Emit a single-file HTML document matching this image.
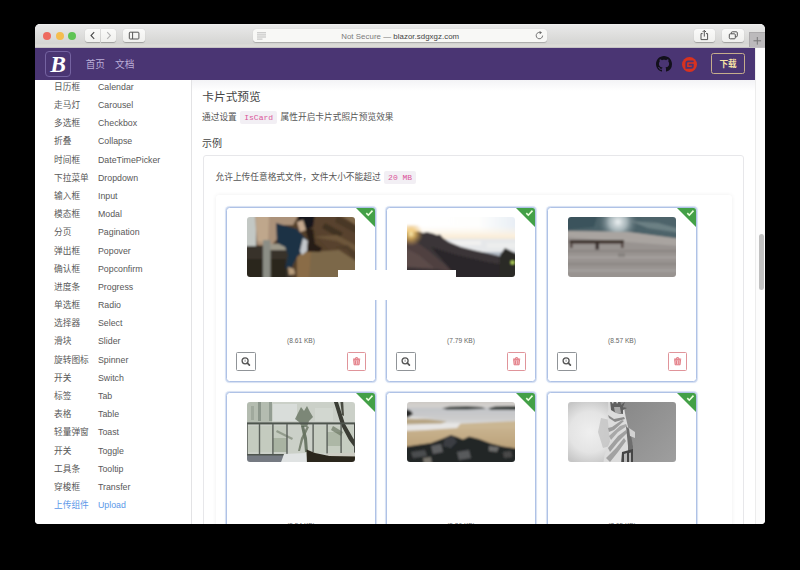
<!DOCTYPE html>
<html lang="zh-CN">
<head>
<meta charset="utf-8">
<title>Not Secure — blazor.sdgxgz.com</title>
<style>
*{box-sizing:border-box;margin:0;padding:0}
html,body{width:800px;height:570px;overflow:hidden;background:#000}
body{font-family:"Liberation Sans","Noto Sans CJK SC",sans-serif;position:relative;color:#333}
.win{position:absolute;left:35px;top:23.5px;width:730px;height:500px;background:#fff;border-radius:5px 5px 4px 4px;overflow:hidden}
.tb{position:absolute;left:0;top:0;width:730px;height:24px;background:linear-gradient(#f2f2f2 0,#e8e8e8 1.500px,#d5d5d3 19.500px,#dcdbd7 21px,#dcdbd7 100%);border-bottom:.500px solid #c4c2c4}
.dot{position:absolute;top:8.300px;width:8px;height:8px;border-radius:50%}
.tbtn svg,.plus svg{display:block}
.tbtn{position:absolute;top:5.500px;height:13px;background:linear-gradient(#fafaf9,#f0f0ee);border-radius:3px;box-shadow:0 .5px .8px rgba(0,0,0,.25)}
.url{position:absolute;left:218.200px;top:5.300px;width:294px;height:13px;background:#f8f8f6;border-radius:3px;box-shadow:0 .5px .8px rgba(0,0,0,.2);font-size:7.850px;line-height:15.300px;text-align:center;color:#444;letter-spacing:.05px}
.ns{color:#7a7a7a}
.plus{position:absolute;left:714px;top:8.300px;width:16px;height:15.700px;background:#bcbabc;border-left:1px solid #acaaac;border-top:1px solid #acaaac}
.nav{position:absolute;left:0;top:24px;width:720px;height:32.5px;background:#4a3573}
.logo{position:absolute;left:10.200px;top:3.500px;width:25.800px;height:25.500px;border:1px solid #7563a1;border-radius:4px;background:#4a3573;color:#fff;font-family:"Liberation Serif",serif;font-style:italic;font-weight:bold;font-size:23.500px;line-height:24.500px;text-align:center}
.nl{position:absolute;top:11.300px;font-size:9.700px;line-height:12px;color:#bbaed8}
.dl{position:absolute;left:676px;top:5.300px;width:34.200px;height:21.500px;border:1px solid #c5ad8c;border-radius:2.5px;color:#f7e3a5;font-size:8.600px;font-weight:bold;line-height:20px;text-align:center}
.side{position:absolute;left:0;top:56.5px;width:156px;height:443.5px;background:#fff}
.div{position:absolute;left:155.800px;top:56.500px;width:1px;height:443.500px;background:#e3e3e5;z-index:3}
.si{position:absolute;left:19px;font-size:8.7px;line-height:12px;color:#585858;white-space:nowrap}
.si b{font-weight:normal;position:absolute;left:44px;top:0;font-size:8.8px}
.si.act,.si.act b{color:#5b97e8}
.main{position:absolute;left:156px;top:56.5px;width:564px;height:443.5px;background:linear-gradient(#f3f3f6,#fff 11px);overflow:hidden}
.sb{position:absolute;left:720px;top:24px;width:10px;height:476px;background:#fcfcfc;border-left:1px solid #ececec}
.thumb{position:absolute;left:2.800px;top:186.500px;width:4.800px;height:56px;border-radius:3px;background:#c1c1c1}
h2{position:absolute;left:11.300px;top:9.300px;font-size:11.700px;font-weight:normal;color:#454545;line-height:16px}
.p1{position:absolute;left:11px;top:29.7px;font-size:8.7px;line-height:14px;color:#555;white-space:nowrap}
code{font-family:"Liberation Mono",monospace;color:#db559a;background:#f2eff4;border-radius:2px;padding:2px 4px;margin:0 1.100px;font-size:8px}
h3{position:absolute;left:11px;top:56.5px;font-size:10px;font-weight:normal;color:#454545;line-height:14px}
.card{position:absolute;left:11.5px;top:75px;width:541.700px;height:400px;border:1px solid #e7e7ea;border-radius:3px;background:#fff}
.p2{position:absolute;left:12px;top:14px;font-size:8.7px;line-height:14px;color:#555;white-space:nowrap}
.inner{position:absolute;left:12px;top:39px;width:516.500px;height:380px;border-radius:3px;box-shadow:0 0 4px rgba(0,0,0,.07);background:#fff}
.uc{position:absolute;width:150px;height:175px;border:1px solid #afc2e6;border-radius:3.500px;background:#fff;overflow:hidden;box-shadow:0 0 0 1px rgba(175,194,230,.4),0 0 2.500px rgba(150,175,225,.3)}
.uc .img{position:absolute;left:19.800px;top:9px;width:108.600px;height:60px;border-radius:3px;overflow:hidden}
.uc .tri{position:absolute;right:0;top:0;width:0;height:0;border-top:19px solid #43a047;border-left:19px solid transparent}
.uc .ck{position:absolute;right:.800px;top:.600px}
.uc .sz{position:absolute;left:0;width:100%;top:127.800px;text-align:center;font-size:6.6px;color:#666;line-height:9px}
.uc .zb,.uc .db{position:absolute;top:144px;width:19.500px;height:19px;border:1px solid #909498;border-radius:1.5px}
.uc .zb{left:9px}
.uc .db{left:120px;width:19px;border-color:#e0949a}
.cover{position:absolute;background:#fff}
</style>
</head>
<body>
<div class="win">
  <div class="tb">
    <div class="dot" style="left:8px;background:#ee6a5f"></div>
    <div class="dot" style="left:20.7px;background:#f5bd4f"></div>
    <div class="dot" style="left:32.8px;background:#5fc454"></div>
    <div class="tbtn" style="left:49.5px;width:15.2px;border-radius:3px 0 0 3px"><svg width="15" height="13" viewBox="0 0 15 13"><path d="M9.2 3.2L6 6.5l3.2 3.3" fill="none" stroke="#4a4a4a" stroke-width="1.1"/></svg></div>
    <div class="tbtn" style="left:65.5px;width:15.5px;border-radius:0 3px 3px 0"><svg width="15" height="13" viewBox="0 0 15 13"><path d="M6.2 3.2l3.2 3.3-3.2 3.3" fill="none" stroke="#b4b4b4" stroke-width="1.1"/></svg></div>
    <div class="tbtn" style="left:87.7px;width:22.5px"><svg width="22" height="13" viewBox="0 0 22 13"><rect x="6.3" y="3.2" width="9.6" height="6.8" rx=".8" fill="none" stroke="#555" stroke-width="1"/><path d="M9.6 3.2v6.8" stroke="#555" stroke-width="1"/></svg></div>
    <div class="url"><svg style="position:absolute;left:4px;top:3px" width="10" height="8" viewBox="0 0 10 8"><path d="M0 .8h9M0 2.900h9M0 5h9M0 7.100h5.500" stroke="#a4a4a4" stroke-width=".700"/></svg><span class="ns">Not Secure — </span>blazor.sdgxgz.com<svg style="position:absolute;left:282px;top:2.5px" width="9" height="9" viewBox="0 0 9 9"><path d="M7.6 4.6a3.2 3.2 0 1 1-1.6-2.8" fill="none" stroke="#666" stroke-width=".9"/><path d="M4.6 0l2.4 1.6-2.2 1.6z" fill="#666"/></svg></div>
    <div class="tbtn" style="left:659px;width:21px"><svg width="21" height="13" viewBox="0 0 21 13"><path d="M8.6 4.6h-1.6v6h6.600v-6h-1.600" fill="none" stroke="#555" stroke-width="1"/><path d="M10.3 7.6v-6M8.500 3.100l1.800-1.800 1.800 1.800" fill="none" stroke="#555" stroke-width="1"/></svg></div>
    <div class="tbtn" style="left:686.6px;width:22.5px"><svg width="22" height="13" viewBox="0 0 22 13"><rect x="7.300" y="4.800" width="6" height="5" rx="1" fill="none" stroke="#555" stroke-width="1"/><path d="M9.300 4.800v-1a1 1 0 0 1 1-1h4a1 1 0 0 1 1 1v3a1 1 0 0 1-1 1h-1" fill="none" stroke="#555" stroke-width="1"/></svg></div>
    <div class="plus"><svg width="15" height="15" viewBox="0 0 15 15"><path d="M3.500 7.800h7.600M7.300 4v7.600" stroke="#777" stroke-width="1"/></svg></div>
  </div>
  <div class="nav">
    <div class="logo">B</div>
    <div class="nl" style="left:50.7px">首页</div>
    <div class="nl" style="left:80px">文档</div>
    <svg style="position:absolute;left:620.800px;top:8.500px" width="16" height="16" viewBox="0 0 16 16"><path fill="#12101a" d="M8 0C3.580 0 0 3.580 0 8c0 3.540 2.290 6.530 5.470 7.590.4.070.55-.17.550-.38 0-.19-.01-.82-.01-1.490-2.010.37-2.530-.49-2.690-.94-.09-.23-.48-.94-.82-1.130-.28-.15-.68-.52-.01-.53.630-.01 1.080.58 1.230.82.720 1.210 1.870.87 2.330.66.070-.52.280-.87.510-1.070-1.780-.2-3.640-.89-3.640-3.950 0-.87.310-1.590.82-2.150-.08-.2-.36-1.020.08-2.120 0 0 .67-.21 2.200.82.640-.18 1.320-.27 2-.27s1.360.09 2 .27c1.530-1.040 2.200-.82 2.200-.82.440 1.100.16 1.920.08 2.120.51.560.82 1.270.82 2.150 0 3.070-1.870 3.750-3.650 3.950.29.250.54.730.54 1.480 0 1.070-.01 1.930-.01 2.200 0 .21.150.46.550.38A8.013 8.013 0 0 0 16 8c0-4.420-3.580-8-8-8z"/></svg>
    <svg style="position:absolute;left:646.700px;top:9px" width="15" height="15" viewBox="0 0 15 15"><circle cx="7.500" cy="7.500" r="7.500" fill="#d8321f"/><path d="M11.300 6.700H7.100a.4.400 0 0 0-.4.400v.9c0 .2.200.4.400.4h2.500c.2 0 .4.200.4.400v.2c0 .6-.5 1.100-1.100 1.100H5.500a.4.400 0 0 1-.4-.4V6.300c0-.6.500-1.100 1.100-1.100h5.100c.2 0 .4-.2.400-.4v-.9a.4.400 0 0 0-.4-.4H6.200A2.800 2.800 0 0 0 3.400 6.300v5.100c0 .2.200.4.400.4h5.400a2.500 2.500 0 0 0 2.500-2.500V7.100a.4.400 0 0 0-.4-.4z" fill="#4a3573"/></svg>
    <div class="dl">下载</div>
  </div>
  <div class="side">
    <div class="si" style="top:0.90px">日历框<b>Calendar</b></div>
    <div class="si" style="top:19.08px">走马灯<b>Carousel</b></div>
    <div class="si" style="top:37.26px">多选框<b>Checkbox</b></div>
    <div class="si" style="top:55.44px">折叠<b>Collapse</b></div>
    <div class="si" style="top:73.62px">时间框<b>DateTimePicker</b></div>
    <div class="si" style="top:91.80px">下拉菜单<b>Dropdown</b></div>
    <div class="si" style="top:109.98px">输入框<b>Input</b></div>
    <div class="si" style="top:128.16px">模态框<b>Modal</b></div>
    <div class="si" style="top:146.34px">分页<b>Pagination</b></div>
    <div class="si" style="top:164.52px">弹出框<b>Popover</b></div>
    <div class="si" style="top:182.70px">确认框<b>Popconfirm</b></div>
    <div class="si" style="top:200.88px">进度条<b>Progress</b></div>
    <div class="si" style="top:219.06px">单选框<b>Radio</b></div>
    <div class="si" style="top:237.24px">选择器<b>Select</b></div>
    <div class="si" style="top:255.42px">滑块<b>Slider</b></div>
    <div class="si" style="top:273.60px">旋转图标<b>Spinner</b></div>
    <div class="si" style="top:291.78px">开关<b>Switch</b></div>
    <div class="si" style="top:309.96px">标签<b>Tab</b></div>
    <div class="si" style="top:328.14px">表格<b>Table</b></div>
    <div class="si" style="top:346.32px">轻量弹窗<b>Toast</b></div>
    <div class="si" style="top:364.50px">开关<b>Toggle</b></div>
    <div class="si" style="top:382.68px">工具条<b>Tooltip</b></div>
    <div class="si" style="top:400.86px">穿梭框<b>Transfer</b></div>
    <div class="si act" style="top:419.04px">上传组件<b>Upload</b></div>
  </div>
  <div class="div"></div>
  <div class="main">
    <h2>卡片式预览</h2>
    <div class="p1">通过设置 <code>IsCard</code> 属性开启卡片式照片预览效果</div>
    <h3>示例</h3>
    <div class="card">
      <div class="p2">允许上传任意格式文件，文件大小不能超过 <code>20 MB</code></div>
      <div class="inner">
      <div class="uc" style="left:10.5px;top:12px">
        <div class="img"><svg width="109" height="60" viewBox="0 0 109 60"><defs><filter id="b1" x="-5%" y="-5%" width="110%" height="110%"><feGaussianBlur stdDeviation="0.8"/></filter></defs><g filter="url(#b1)">
<rect x="-3" y="-3" width="115" height="66" fill="#54402c"/>
<polygon points="62,-3 112,-3 112,40 84,34 70,20" fill="#58432e"/>
<polygon points="92,-3 112,-3 112,10" fill="#80694b"/>
<polygon points="78,6 96,16 92,21 75,11" fill="#3f3120"/>
<polygon points="90,-1 112,10 112,18 88,5" fill="#4a3926"/>
<polygon points="66,20 90,24 112,36 112,30 90,18" fill="#6d573b"/>
<polygon points="50,36 92,33 112,46 112,63 50,63" fill="#7c6848"/>
<polygon points="50,36 64,35 62,63 50,63" fill="#8a6c46"/>
<polygon points="88,30 100,33 112,48 112,38 100,28" fill="#4f3e2a"/>
<rect x="-3" y="-3" width="12" height="34" fill="#c3c8c4"/>
<rect x="-3" y="29" width="48" height="34" fill="#38322a"/>
<rect x="-3" y="42" width="42" height="21" fill="#2a251d"/>
<polygon points="8,-3 52,-3 46,8 34,8 30,22 24,29 10,28" fill="#ab927a"/>
<polygon points="9,-3 22,-3 21,26 10,24" fill="#bfa78c"/>
<rect x="20" y="27" width="24" height="6" fill="#9d998a"/>
<rect x="16" y="23" width="7.500" height="40" fill="#8c8e86"/>
<polygon points="29,6 50,12 60,23 59,32 50,40 44,52 38,51 41,38 38,30 30,26" fill="#1f3144"/>
<polygon points="51,-3 68,-3 66,10 58,13 51,9" fill="#17161d"/>
<polygon points="56,21 61,24 60,34 55,38 53,34" fill="#c2c6ca"/>
<polygon points="58,11 66,12 68,27 75,31 73,35 60,34 61,22" fill="#261a14"/>
<polygon points="41,50 47,52 48,57 42,58" fill="#b89c7a"/>
<polygon points="50,5 56,3 59,13 53,15" fill="#c4a88e"/>
</g></svg></div>
        <div class="tri"></div><svg class="ck" width="9" height="8" viewBox="0 0 9 8"><path d="M1.300 4.100l2 2.100 4.200-4.600" fill="none" stroke="#eaffdc" stroke-width="1.600"/></svg>
        <div class="sz">(8.61 KB)</div>
        <div class="zb"><svg width="17" height="17" viewBox="0 0 17 17"><circle cx="8.1" cy="7.8" r="3" fill="none" stroke="#555" stroke-width="1.3"/><path d="M10.4 10.1l2 2" stroke="#555" stroke-width="1.7" stroke-linecap="round"/><path d="M8.1 6.6v2.2" stroke="#666" stroke-width=".7"/></svg></div>
        <div class="db"><svg width="17" height="17" viewBox="0 0 17 17"><path d="M5 6.1h7.2M7.2 5.9l.5-1.2h1.8l.5 1.2" fill="none" stroke="#e0707a" stroke-width="1"/><path d="M5.7 6.8h5.8l-.4 5h-5z" fill="#f3c3c8" stroke="#e0707a" stroke-width=".9"/><path d="M7.5 7.6v3.6M9.7 7.6v3.6" stroke="#e0707a" stroke-width=".8"/></svg></div>
      </div>
      <div class="uc" style="left:170.5px;top:12px">
        <div class="img"><svg width="109" height="60" viewBox="0 0 109 60"><defs><filter id="b2" x="-5%" y="-5%" width="110%" height="110%"><feGaussianBlur stdDeviation="0.8"/></filter><linearGradient id="s2" x1="0" y1="0" x2="1" y2="0"><stop offset="0" stop-color="#ffffff"/><stop offset=".65" stop-color="#fefefd"/><stop offset="1" stop-color="#e6edf4"/></linearGradient><linearGradient id="h2" x1="0" y1="0" x2="0" y2="1"><stop offset="0" stop-color="#fdf6ea" stop-opacity="0"/><stop offset=".7" stop-color="#fbefdc"/><stop offset="1" stop-color="#f3e8d8"/></linearGradient><radialGradient id="g2" cx="4" cy="17" r="12" gradientUnits="userSpaceOnUse"><stop offset="0" stop-color="#fff2b8"/><stop offset=".35" stop-color="#eebf62" stop-opacity=".8"/><stop offset="1" stop-color="#e0a850" stop-opacity="0"/></radialGradient></defs><g filter="url(#b2)">
<rect x="-3" y="-3" width="115" height="66" fill="url(#s2)"/>
<rect x="-3" y="9" width="115" height="14" fill="url(#h2)"/>
<rect x="36" y="22" width="76" height="15" fill="#e6e8ea"/>
<rect x="44" y="24" width="30" height="4" fill="#f1f1f0"/>
<rect x="80" y="26" width="32" height="5" fill="#eceded"/>
<rect x="60" y="35" width="52" height="7" fill="#b2bac4"/>
<polygon points="-3,15.500 5,15 12,14.500 16,16 20,15 26,16.500 30,18 33,17.500 36,21 42,25 54,30 68,33.500 84,37 96,40 112,44 112,63 -3,63" fill="#3b3537"/>
<polygon points="-3,20 8,24 22,34 36,46 46,56 50,63 -3,63" fill="#4f4141"/>
<polygon points="-3,30 12,38 26,50 34,63 -3,63" fill="#5b4b49"/>
<polygon points="-3,50 30,52 50,56 50,63 -3,63" fill="#3a3234"/>
<polygon points="24,30 50,38 80,45 112,50 112,63 52,63 40,48" fill="#2b2729"/>
<polygon points="93,38 98,31 112,38 112,63 92,63" fill="#2a2a27"/>
<rect x="-3" y="8" width="26" height="22" fill="url(#g2)"/>
<circle cx="105.500" cy="45.500" r="2" fill="#b4d45a"/>
</g></svg></div>
        <div class="tri"></div><svg class="ck" width="9" height="8" viewBox="0 0 9 8"><path d="M1.300 4.100l2 2.100 4.200-4.600" fill="none" stroke="#eaffdc" stroke-width="1.600"/></svg>
        <div class="sz">(7.79 KB)</div>
        <div class="zb"><svg width="17" height="17" viewBox="0 0 17 17"><circle cx="8.1" cy="7.8" r="3" fill="none" stroke="#555" stroke-width="1.3"/><path d="M10.4 10.1l2 2" stroke="#555" stroke-width="1.7" stroke-linecap="round"/><path d="M8.1 6.6v2.2" stroke="#666" stroke-width=".7"/></svg></div>
        <div class="db"><svg width="17" height="17" viewBox="0 0 17 17"><path d="M5 6.1h7.2M7.2 5.9l.5-1.2h1.8l.5 1.2" fill="none" stroke="#e0707a" stroke-width="1"/><path d="M5.7 6.8h5.8l-.4 5h-5z" fill="#f3c3c8" stroke="#e0707a" stroke-width=".9"/><path d="M7.5 7.6v3.6M9.7 7.6v3.6" stroke="#e0707a" stroke-width=".8"/></svg></div>
      </div>
      <div class="uc" style="left:331.5px;top:12px">
        <div class="img"><svg width="109" height="60" viewBox="0 0 109 60"><defs><filter id="b3" x="-5%" y="-5%" width="110%" height="110%"><feGaussianBlur stdDeviation="0.8"/></filter><radialGradient id="g3" cx="50" cy="5" r="20" gradientUnits="userSpaceOnUse"><stop offset="0" stop-color="#eef2f3"/><stop offset=".45" stop-color="#b4c1c5" stop-opacity=".85"/><stop offset="1" stop-color="#5a6e74" stop-opacity="0"/></radialGradient></defs><g filter="url(#b3)">
<rect x="-3" y="-3" width="115" height="66" fill="#989390"/>
<polygon points="-3,-3 112,-3 112,22 60,15 -3,14" fill="#4c6269"/>
<polygon points="-3,-3 30,-3 26,10 -3,13" fill="#3b535b"/>
<polygon points="72,-3 112,-3 112,20 78,14" fill="#4e646a"/>
<polygon points="62,4 90,6 112,12 112,16 80,11" fill="#6c8084"/>
<rect x="26" y="-3" width="48" height="20" fill="url(#g3)"/>
<polygon points="-3,14 60,15 112,22 112,29 -3,20" fill="#a9a4a0"/>
<rect x="-3" y="33" width="115" height="2" fill="#8a8582"/>
<rect x="-3" y="39" width="115" height="2.500" fill="#a5a09d"/>
<rect x="-3" y="46" width="115" height="2" fill="#8b8784"/>
<rect x="-3" y="52" width="115" height="3" fill="#a29e9b"/>
<rect x="1.500" y="23" width="54.500" height="3.600" fill="#3c302c"/>
<rect x="2" y="26" width="2.500" height="5" fill="#51443f"/>
<rect x="27.500" y="26" width="3.500" height="6.500" fill="#392e2c"/>
<rect x="53" y="26" width="2.500" height="5" fill="#51443f"/>
<rect x="50" y="36" width="7" height="4" fill="#878380"/>
</g></svg></div>
        <div class="tri"></div><svg class="ck" width="9" height="8" viewBox="0 0 9 8"><path d="M1.300 4.100l2 2.100 4.200-4.600" fill="none" stroke="#eaffdc" stroke-width="1.600"/></svg>
        <div class="sz">(8.57 KB)</div>
        <div class="zb"><svg width="17" height="17" viewBox="0 0 17 17"><circle cx="8.1" cy="7.8" r="3" fill="none" stroke="#555" stroke-width="1.3"/><path d="M10.4 10.1l2 2" stroke="#555" stroke-width="1.7" stroke-linecap="round"/><path d="M8.1 6.6v2.2" stroke="#666" stroke-width=".7"/></svg></div>
        <div class="db"><svg width="17" height="17" viewBox="0 0 17 17"><path d="M5 6.1h7.2M7.2 5.9l.5-1.2h1.8l.5 1.2" fill="none" stroke="#e0707a" stroke-width="1"/><path d="M5.7 6.8h5.8l-.4 5h-5z" fill="#f3c3c8" stroke="#e0707a" stroke-width=".9"/><path d="M7.5 7.6v3.6M9.7 7.6v3.6" stroke="#e0707a" stroke-width=".8"/></svg></div>
      </div>
      <div class="uc" style="left:10.5px;top:197px">
        <div class="img"><svg width="109" height="60" viewBox="0 0 109 60"><defs><filter id="b4" x="-5%" y="-5%" width="110%" height="110%"><feGaussianBlur stdDeviation="0.7"/></filter></defs><g filter="url(#b4)">
<rect x="-3" y="-3" width="115" height="66" fill="#cbd0c8"/>
<rect x="-3" y="-3" width="28" height="24" fill="#b4bcb0"/>
<rect x="26" y="2" width="24" height="17" fill="#d9ddda"/>
<rect x="68" y="6" width="18" height="13" fill="#d2d7d0"/>
<rect x="11" y="0" width="3" height="19" fill="#8c968b"/>
<rect x="22" y="-3" width="3" height="22" fill="#939d92"/>
<rect x="4" y="4" width="3" height="14" fill="#a0a99d"/>
<rect x="0" y="24" width="40" height="26" fill="#c4cbbf"/>
<rect x="26" y="36" width="14" height="14" fill="#a9b3a2"/>
<rect x="66" y="24" width="40" height="27" fill="#c6cdc1"/>
<rect x="80" y="30" width="14" height="14" fill="#adb7a6"/>
<polygon points="86,-3 90,-3 98,22 106,36 110,42 108,46 102,38 94,23" fill="#3a3c34"/>
<polygon points="93,-3 96,-3 97,14 95,13" fill="#4a4c42"/>
<polygon points="86,24 96,30 94,34 84,28" fill="#6c7764" opacity=".7"/>
<polygon points="51,11 54,5 57,9 60,4 63,10 66,15 62,19 60,25 55,25 52,20 48,17" fill="#5a6854" opacity=".7"/>
<polygon points="54,24 57,24 60,36 61,50 58,50 57,38" fill="#5c6956" opacity=".85"/>
<polygon points="60,24 62,25 56,38 53,49 51,49 54,36" fill="#66725f" opacity=".8"/>
<polygon points="30,28 46,36 45,38 29,30" fill="#7d8876" opacity=".7"/>
<rect x="-3" y="20.400" width="115" height="2" fill="#4e544e"/>
<rect x="-1" y="22" width="1.800" height="31" fill="#5a605a"/>
<rect x="11.800" y="22" width="1.400" height="31" fill="#5a605a"/>
<rect x="25.200" y="22" width="1.400" height="31" fill="#5a605a"/>
<rect x="39.300" y="22" width="1.400" height="31" fill="#5a605a"/>
<rect x="65.400" y="22" width="1.400" height="28" fill="#5a605a"/>
<rect x="79.400" y="22" width="1.400" height="30" fill="#5a605a"/>
<rect x="93.400" y="22" width="1.400" height="30" fill="#5a605a"/>
<rect x="107" y="22" width="1.800" height="30" fill="#484d47"/>
<rect x="-3" y="53" width="40" height="10" fill="#747a82"/>
<rect x="-3" y="52" width="40" height="1.500" fill="#50544f"/>
<polygon points="37,52 59,51 62,63 33,63" fill="#e0e3e3"/>
<polygon points="59.500,47.500 68,51 80,53.500 112,54 112,63 60,63" fill="#2b261a"/>
<polygon points="78,51.500 112,50.500 112,54.500 82,54" fill="#cbcbc2"/>
</g></svg></div>
        <div class="tri"></div><svg class="ck" width="9" height="8" viewBox="0 0 9 8"><path d="M1.300 4.100l2 2.100 4.200-4.600" fill="none" stroke="#eaffdc" stroke-width="1.600"/></svg>
        <div class="sz">(9.54 KB)</div>
        <div class="zb"><svg width="17" height="17" viewBox="0 0 17 17"><circle cx="8.1" cy="7.8" r="3" fill="none" stroke="#555" stroke-width="1.3"/><path d="M10.4 10.1l2 2" stroke="#555" stroke-width="1.7" stroke-linecap="round"/><path d="M8.1 6.6v2.2" stroke="#666" stroke-width=".7"/></svg></div>
        <div class="db"><svg width="17" height="17" viewBox="0 0 17 17"><path d="M5 6.1h7.2M7.2 5.9l.5-1.2h1.8l.5 1.2" fill="none" stroke="#e0707a" stroke-width="1"/><path d="M5.7 6.8h5.8l-.4 5h-5z" fill="#f3c3c8" stroke="#e0707a" stroke-width=".9"/><path d="M7.5 7.6v3.6M9.7 7.6v3.6" stroke="#e0707a" stroke-width=".8"/></svg></div>
      </div>
      <div class="uc" style="left:170.5px;top:197px">
        <div class="img"><svg width="109" height="60" viewBox="0 0 109 60"><defs><filter id="b5" x="-5%" y="-5%" width="110%" height="110%"><feGaussianBlur stdDeviation="0.8"/></filter><linearGradient id="s5" x1="0" y1="0" x2="0" y2="1"><stop offset="0" stop-color="#c6c1bd"/><stop offset=".1" stop-color="#d4d1ce"/><stop offset=".16" stop-color="#c3c5c8"/><stop offset=".3" stop-color="#cccccc"/><stop offset=".4" stop-color="#dedede"/><stop offset=".45" stop-color="#c8b28e"/><stop offset=".75" stop-color="#bba27a"/><stop offset="1" stop-color="#a88c62"/></linearGradient></defs><g filter="url(#b5)">
<rect x="-3" y="-3" width="115" height="66" fill="url(#s5)"/>
<polygon points="48,22 112,19 112,27 48,27" fill="#cab692"/>
<polygon points="-3,21 54,21 50,26 20,28 -3,29" fill="#e6e5e4"/>
<polygon points="-3,15.700 16,16.500 40,19.500 34,21.500 -3,22.500" fill="#b7a685"/>
<polygon points="-3,13 8,15 30,16.500 8,17 -3,16.500" fill="#dfdedd"/>
<polygon points="35,6.600 42,4.800 60,4.300 74,4.900 79,6.800 60,7.600 40,7.600" fill="#2e3432"/>
<polygon points="81,6.400 88,4.400 112,4 112,7.900 84,7.700" fill="#2a302e"/>
<polygon points="-3,6 4,9 6,12 2,15 -3,16" fill="#2a2c2a"/>
<polygon points="-3,45 10,43 24,41 36,36.500 44,33 50,35 56,37.500 62,34.500 72,37 84,41.500 96,44.500 112,47 112,63 -3,63" fill="#242527"/>
<polygon points="38,36 46,34 50,40 44,46 36,44" fill="#3b3e43"/>
<polygon points="24,44 34,42 36,50 26,52" fill="#5e6062"/>
<polygon points="50,50 62,48 64,56 52,58" fill="#585a5c"/>
<polygon points="4,50 18,48 20,54 6,56" fill="#4c4e50"/>
<polygon points="82,44 92,45 90,50 82,49" fill="#6c6c6a"/>
<polygon points="16,56 24,55 25,62 17,62" fill="#77736c"/>
<polygon points="96,50 104,49 105,55 97,56" fill="#4a4a4a"/>
</g></svg></div>
        <div class="tri"></div><svg class="ck" width="9" height="8" viewBox="0 0 9 8"><path d="M1.300 4.100l2 2.100 4.200-4.600" fill="none" stroke="#eaffdc" stroke-width="1.600"/></svg>
        <div class="sz">(9.86 KB)</div>
        <div class="zb"><svg width="17" height="17" viewBox="0 0 17 17"><circle cx="8.1" cy="7.8" r="3" fill="none" stroke="#555" stroke-width="1.3"/><path d="M10.4 10.1l2 2" stroke="#555" stroke-width="1.7" stroke-linecap="round"/><path d="M8.1 6.6v2.2" stroke="#666" stroke-width=".7"/></svg></div>
        <div class="db"><svg width="17" height="17" viewBox="0 0 17 17"><path d="M5 6.1h7.2M7.2 5.9l.5-1.2h1.8l.5 1.2" fill="none" stroke="#e0707a" stroke-width="1"/><path d="M5.7 6.8h5.8l-.4 5h-5z" fill="#f3c3c8" stroke="#e0707a" stroke-width=".9"/><path d="M7.5 7.6v3.6M9.7 7.6v3.6" stroke="#e0707a" stroke-width=".8"/></svg></div>
      </div>
      <div class="uc" style="left:331.5px;top:197px">
        <div class="img"><svg width="109" height="60" viewBox="0 0 109 60"><defs><filter id="b6" x="-5%" y="-5%" width="110%" height="110%"><feGaussianBlur stdDeviation="0.7"/></filter><radialGradient id="s6" cx="22" cy="30" r="34" gradientUnits="userSpaceOnUse"><stop offset="0" stop-color="#efefef"/><stop offset=".6" stop-color="#e4e4e4"/><stop offset="1" stop-color="#c6c6c6"/></radialGradient><linearGradient id="r6" x1="0" y1="0" x2="1" y2="1"><stop offset="0" stop-color="#878787"/><stop offset="1" stop-color="#a0a0a0"/></linearGradient></defs><g filter="url(#b6)">
<rect x="-3" y="-3" width="115" height="66" fill="url(#s6)"/>
<rect x="52" y="-3" width="60" height="66" fill="url(#r6)"/>
<polygon points="33,16 42,18 42,44 35,46 30,30" fill="#b8b8b8" opacity=".6"/>
<polygon points="40,-3 52,-3 52,10 40,12" fill="#d8d8d8"/>
<polygon points="43,3 56,5 57.500,14 60,25 64.500,43 64.500,63 35,63 36.500,53 42,39.500 40.500,25 39,11.500" fill="#dcdcdc"/>
<polygon points="42,-2 45,2 47,-3 49,2 52,-3 53,3 57,0 55,5 59,6 55,8 55,12 48,11 43,8" fill="#5e5e5e"/>
<polygon points="46,5 52,5 53,11 47,11" fill="#a8a8a8"/>
<polygon points="40,13 46,17 56,15 57,17 47,20 41,16" fill="#8a8a8a"/>
<polygon points="40,26 44,25 54,18 56,19 46,28 41,30" fill="#9c9c9c"/>
<polygon points="41,34 52,24 58,22 59,24 50,30 43,38" fill="#a8a8a8"/>
<polygon points="40,46 50,34 58,28 59,31 50,40 42,50" fill="#a0a0a0"/>
<polygon points="38,56 48,46 56,36 58,39 50,50 42,60" fill="#a2a2a2"/>
<polygon points="58,24 62,28 65,44 65,63 60,63 60,44" fill="#6e6e6e"/>
<polygon points="61,26 67,30 67,36 62,34" fill="#d2d2d2"/>
<polygon points="54,50 65,47 65,63 53,63" fill="#444"/>
<polygon points="56,52 59,51 59,63 56,63" fill="#b8b8b8"/>
<polygon points="61,51 63,50.500 63,63 61,63" fill="#b0b0b0"/>
</g></svg></div>
        <div class="tri"></div><svg class="ck" width="9" height="8" viewBox="0 0 9 8"><path d="M1.300 4.100l2 2.100 4.200-4.600" fill="none" stroke="#eaffdc" stroke-width="1.600"/></svg>
        <div class="sz">(7.65 KB)</div>
        <div class="zb"><svg width="17" height="17" viewBox="0 0 17 17"><circle cx="8.1" cy="7.8" r="3" fill="none" stroke="#555" stroke-width="1.3"/><path d="M10.4 10.1l2 2" stroke="#555" stroke-width="1.7" stroke-linecap="round"/><path d="M8.1 6.6v2.2" stroke="#666" stroke-width=".7"/></svg></div>
        <div class="db"><svg width="17" height="17" viewBox="0 0 17 17"><path d="M5 6.1h7.2M7.2 5.9l.5-1.2h1.8l.5 1.2" fill="none" stroke="#e0707a" stroke-width="1"/><path d="M5.7 6.8h5.8l-.4 5h-5z" fill="#f3c3c8" stroke="#e0707a" stroke-width=".9"/><path d="M7.5 7.6v3.6M9.7 7.6v3.6" stroke="#e0707a" stroke-width=".8"/></svg></div>
      </div>
        <div class="cover" style="left:122.5px;top:75px;width:117.5px;height:30px"></div>
      </div>
    </div>
  </div>
  <div class="sb"><div class="thumb"></div></div>
</div>
</body>
</html>
